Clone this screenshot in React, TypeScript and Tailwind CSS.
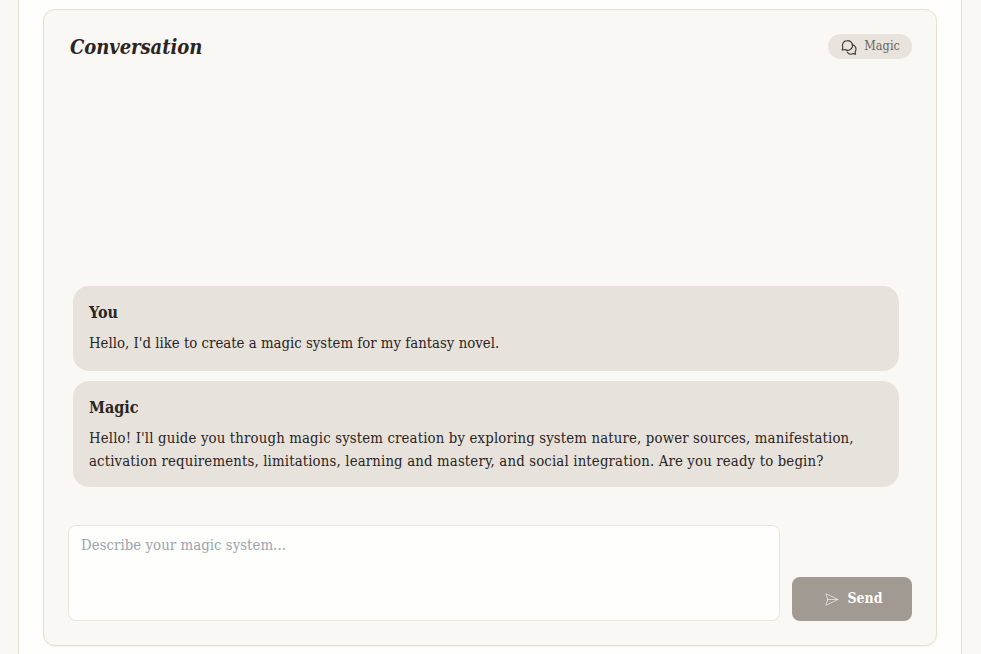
import React from 'react';
import { SendHorizontal } from 'lucide-react';

const messages = [
  { id: 1, who: 'You', pad: 'pb-[17px]', track: 'tracking-[0.01px]', text: "Hello, I'd like to create a magic system for my fantasy novel." },
  {
    id: 2,
    who: 'Magic',
    pad: 'pb-[15px]',
    track: 'tracking-[0.15px]',
    text: "Hello! I'll guide you through magic system creation by exploring system nature, power sources, manifestation, activation requirements, limitations, learning and mastery, and social integration. Are you ready to begin?",
  },
];

const ChatsIcon = () => (
  <svg width="16" height="16" viewBox="0 0 16 16" fill="none" stroke="#3a3430" strokeWidth="1.1" strokeLinecap="round" strokeLinejoin="round">
    <path d="M6.3 1.6a4.9 4.9 0 0 0-4.5 6.8L1.2 11l2.7-.5a4.9 4.9 0 1 0 2.4-8.9Z" />
    <path d="M11 5.6a4.5 4.5 0 0 1 3 7.2l.6 2.4-2.6-.6a4.5 4.5 0 0 1-5.8-1.6" />
  </svg>
);

export default function App() {
  return (
    <div className="h-[654px] overflow-hidden bg-[#faf8f5] font-['DejaVu_Serif_Condensed','DejaVu_Serif',serif]">
      <div className="ml-[18px] mr-[19px] h-full border-x border-[#e6dfd0] bg-[#fefefd] px-6 pt-[9px]">
        <div className="flex h-[637px] flex-col rounded-xl border border-[#e5e0d0] bg-[#faf8f5] p-6 shadow-xs">
          <div className="flex h-[25px] items-center justify-between">
            <h2 className="pl-[2px] text-[20px] font-bold italic tracking-[-0.05px] text-[#2a2522]">Conversation</h2>
            <span className="flex h-[25px] items-center gap-[7px] rounded-full bg-[#e8e3dc] pl-[13px] pr-3 text-[12.5px] tracking-[0.1px] text-[#6b635b]">
              <ChatsIcon />
              Magic
            </span>
          </div>

          <div className="flex flex-1 flex-col justify-end gap-[10px] pl-[5px] pr-[13px]">
            {messages.map((m) => (
              <div key={m.id} className={`rounded-2xl bg-[#e7e2dc] px-4 pt-[14px] text-[#2a2522] ${m.pad}`}>
                <div className="mb-[5px] text-[16px] leading-[26px] font-bold">{m.who}</div>
                <p className={`text-[14.8px] leading-[23px] ${m.track}`}>{m.text}</p>
              </div>
            ))}
          </div>

          <div className="mt-[38px] flex items-end gap-3">
            <div className="h-[96px] flex-1 rounded-lg border border-[#ebe6de] bg-[#fefefc] px-3 py-2 text-[14.8px] leading-[22px] tracking-[0.05px] text-[#9ca3af]">
              Describe your magic system...
            </div>
            <button className="flex h-[44px] w-[120px] items-center justify-center gap-2 rounded-lg bg-[#a09a92] pl-[3px] text-[14px] font-bold text-[#fdfcfa]">
              <SendHorizontal size={15} strokeWidth={1} />
              <span className="-translate-y-px">Send</span>
            </button>
          </div>
        </div>
      </div>
    </div>
  );
}
